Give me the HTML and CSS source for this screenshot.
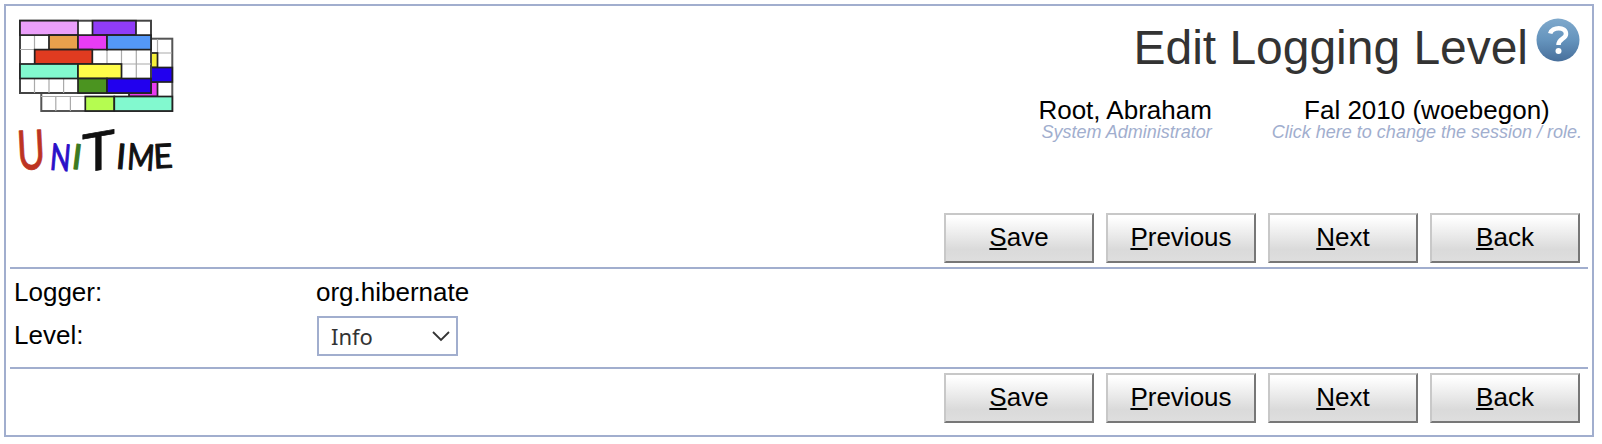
FILE: index.html
```html
<!DOCTYPE html>
<html lang="en">
<head>
<meta charset="utf-8">
<title>Edit Logging Level</title>
<link rel="stylesheet" href="styles.css">
</head>
<body>
<main class="page">
  <header class="header">
    <svg class="logo" width="164" height="180" viewBox="16 16 164 180" role="img" aria-label="UniTime">
      <g stroke="#222" stroke-width="1.7">
        <rect x="41.3" y="38.7" width="131" height="72.3" fill="#fff" stroke="#555" stroke-width="2"/>
        <path d="M55.8 97v14M70.4 97v14M157.5 39v57M152 53h20M41 96.5h131" stroke="#aaa" stroke-width="1.2"/>
        <rect x="143" y="53" width="14.5" height="14.5" fill="#f6f03a"/>
        <rect x="129" y="82" width="28.5" height="14.5" fill="#e83cf0"/>
        <rect x="143" y="67.5" width="29.3" height="14.5" fill="#2200ee"/>
        <rect x="85.3" y="96.5" width="29" height="14.5" fill="#b5fc50"/>
        <rect x="114.3" y="96.5" width="58" height="14.5" fill="#82f9cf"/>
        <rect x="20" y="20.7" width="131" height="72.3" fill="#fff" stroke="#444" stroke-width="2"/>
        <path d="M34.5 35v58M49 35v58M63.6 78v15M92.5 49.5v15M107 49.5v15M121.5 49.5v29M136.3 49.5v29M92 64h59M20 49.5h29M20 64h15" stroke="#aaa" stroke-width="1.2" fill="none"/>
        <rect x="20" y="20.7" width="58" height="14.4" fill="#eb9ffa"/>
        <rect x="92.5" y="20.7" width="43.5" height="14.4" fill="#903cf8"/>
        <rect x="49" y="35.1" width="29" height="14.5" fill="#e9a14c"/>
        <rect x="78" y="35.1" width="29" height="14.5" fill="#e83cf5"/>
        <rect x="107" y="35.1" width="44" height="14.5" fill="#5498f8"/>
        <rect x="34.7" y="49.6" width="57.6" height="14.4" fill="#e03b20"/>
        <rect x="20" y="64" width="58" height="14.5" fill="#82f9cf"/>
        <rect x="78" y="64" width="43.5" height="14.5" fill="#fffd4a"/>
        <rect x="78" y="78.5" width="29" height="14.5" fill="#4b9420"/>
        <rect x="107" y="78.5" width="44" height="14.5" fill="#2200ee"/>
      </g>
      <g class="wordmark">
        <text class="cap red" transform="translate(32 169.3) rotate(-3) scale(.72 1.03)">U</text>
        <text class="low blue" transform="translate(59.3 170.5) rotate(5) scale(.76 1.05)">N</text>
        <text class="low green" transform="translate(75.5 169) rotate(7)">I</text>
        <text class="cap black" transform="translate(98.5 170) skewY(-10) scale(1.05 1)">T</text>
        <text class="low black" transform="translate(120.2 169) rotate(5)">I</text>
        <text class="low black" transform="translate(140 170) rotate(4) scale(.84 1.03)">M</text>
        <text class="low black" transform="translate(163.5 168) rotate(-3) scale(.95 .96)">E</text>
      </g>
    </svg>
    <div class="heading">
      <div class="title-row">
        <h1 class="title">Edit Logging Level</h1>
        <svg class="help" width="44" height="44" viewBox="0 0 44 44" role="img" aria-label="Help">
          <defs><linearGradient id="ball" x1="0" y1="0" x2="0" y2="1"><stop offset="0" stop-color="#7fa9cc"/><stop offset=".5" stop-color="#6594bd"/><stop offset="1" stop-color="#486f9b"/></linearGradient></defs>
          <circle cx="22" cy="22" r="21.5" fill="url(#ball)"/>
          <path d="M14.2 15.5C16 8.500 30 8 30 16C30 21 22.500 20.500 22.500 27" fill="none" stroke="#fff" stroke-width="4.500"/>
          <circle cx="22.500" cy="33" r="3" fill="#fff"/>
        </svg>
      </div>
      <div class="info-row">
        <div class="info user"><div class="name">Root, Abraham</div><div class="hint">System Administrator</div></div>
        <div class="info session"><div class="name">Fal 2010 (woebegon)</div><div class="hint">Click here to change the session / role.</div></div>
      </div>
    </div>
  </header>
  <div class="buttons">
    <button class="btn"><u>S</u>ave</button>
    <button class="btn"><u>P</u>revious</button>
    <button class="btn"><u>N</u>ext</button>
    <button class="btn"><u>B</u>ack</button>
  </div>
  <section class="form">
    <div class="label">Logger:</div>
    <div class="value">org.hibernate</div>
    <div class="label">Level:</div>
    <div class="select" role="combobox" tabindex="0"><span>Info</span>
      <svg width="18" height="11" viewBox="0 0 18 11"><path d="M1 1L9 9L17 1" fill="none" stroke="#333" stroke-width="1.8"/></svg>
    </div>
  </section>
  <div class="buttons">
    <button class="btn"><u>S</u>ave</button>
    <button class="btn"><u>P</u>revious</button>
    <button class="btn"><u>N</u>ext</button>
    <button class="btn"><u>B</u>ack</button>
  </div>
</main>
</body>
</html>
```
FILE: styles.css
```css
* { box-sizing: border-box; }
body {
  margin: 0;
  padding: 4px 8px 0 4px;
  background: #fff;
  color: #000;
  font: 26px/30px "Liberation Sans", Arial, sans-serif;
}
.page {
  height: 433px;
  border: 2px solid #a1aece;
  padding: 10px 4px 0;
}
.header {
  display: flex;
  justify-content: space-between;
  height: 197px;
  padding: 0 6px;
}
.logo { display: block; overflow: visible; }
.wordmark text {
  font-family: Lato, sans-serif;
  text-anchor: middle;
  stroke-linejoin: round;
}
.cap { font-size: 53px; stroke-width: .8px; }
.low { font-size: 35px; stroke-width: 1.1px; }
.red { fill: #bd3422; stroke: #bd3422; }
.blue { fill: #2a10c8; stroke: #2a10c8; }
.green { fill: #3c7a20; stroke: #3c7a20; }
.black { fill: #111; stroke: #111; }
.heading { display: flex; flex-direction: column; align-items: flex-end; }
.title-row { display: flex; gap: 8px; padding: 2px 2px 0 0; }
.title {
  margin: 2px 0 0;
  font-size: 48px;
  line-height: 56px;
  font-weight: 400;
  letter-spacing: -.03px;
  color: #333;
  white-space: nowrap;
}
.info-row { display: flex; gap: 60px; margin-top: 23px; }
.info { line-height: 22px; white-space: nowrap; }
.user { text-align: right; }
.session { text-align: center; }
.hint { font-size: 18px; font-style: italic; color: #a1aece; }
.buttons { display: flex; justify-content: flex-end; gap: 12px; padding-right: 8px; }
.btn {
  width: 150px;
  height: 50px;
  padding: 0 0 3px;
  border: 2px solid;
  border-color: #c8c8c8 #777 #777 #c8c8c8;
  background: linear-gradient(#fff 5%, #dadada 75%, #dedede);
  color: #000;
  font: 26px/30px "Liberation Sans", Arial, sans-serif;
}
.btn u { text-decoration-thickness: 2px; text-underline-offset: 2px; }
.form {
  display: grid;
  grid-template-columns: 302px 1fr;
  grid-template-rows: 47px 40px;
  height: 102px;
  margin: 4px 0;
  padding-left: 4px;
  border-top: 2px solid #a1aece;
  border-bottom: 2px solid #a1aece;
}
.label, .value { padding-top: 8px; }
.label:nth-child(3) { padding-top: 4px; }
.select {
  display: flex;
  align-items: center;
  justify-content: space-between;
  width: 141px;
  height: 40px;
  margin-left: 1px;
  padding: 0 6px 0 12px;
  border: 2px solid #a1aece;
  color: #333;
  font: 22px/36px "Noto Sans", sans-serif;
}
```
